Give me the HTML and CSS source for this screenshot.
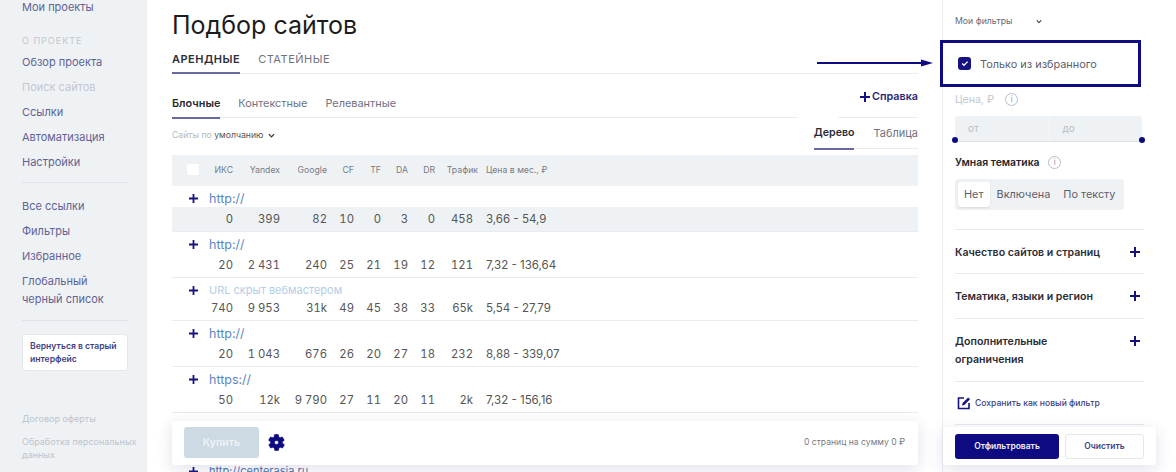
FILE: index.html
```html
<!DOCTYPE html>
<html lang="ru">
<head>
  <meta charset="UTF-8">
  <title>Подбор сайтов</title>
  <link rel="stylesheet" href="styles.css">
</head>
<body>
  <div class="layout">
    <!-- Левое меню -->
    <aside class="sidebar">
      <a class="side-link side-first">Мои проекты</a>
      <div class="side-title">О ПРОЕКТЕ</div>
      <a class="side-link">Обзор проекта</a>
      <a class="side-link side-muted">Поиск сайтов</a>
      <a class="side-link">Ссылки</a>
      <a class="side-link">Автоматизация</a>
      <a class="side-link">Настройки</a>
      <div class="side-line"></div>
      <a class="side-link">Все ссылки</a>
      <a class="side-link">Фильтры</a>
      <a class="side-link">Избранное</a>
      <a class="side-link side-wrap">Глобальный черный список</a>
      <div class="side-line side-line-low"></div>
      <a class="old-button">Вернуться в старый интерфейс</a>
      <a class="side-small side-small-first">Договор оферты</a>
      <a class="side-small">Обработка персональных данных</a>
    </aside>

    <!-- Таблица -->
    <main class="content">
      <h1>Подбор сайтов</h1>
      <div class="tabs">
        <a class="tab active">АРЕНДНЫЕ</a>
        <a class="tab">СТАТЕЙНЫЕ</a>
      </div>
      <div class="subtabs-row">
        <div class="subtabs">
          <a class="subtab active">Блочные</a>
          <a class="subtab">Контекстные</a>
          <a class="subtab">Релевантные</a>
        </div>
        <a class="help">
          <svg class="plus" viewBox="0 0 10 10"><path d="M5 0v10M0 5h10"/></svg>Справка
        </a>
      </div>
      <div class="toolbar">
        <div class="sort">Сайты по <b>умолчанию</b>
          <svg class="chevron" viewBox="0 0 8 5"><path d="M1 1l3 3 3-3"/></svg>
        </div>
        <div class="views">
          <a class="view active">Дерево</a>
          <a class="view">Таблица</a>
        </div>
      </div>

      <div class="table-head">
        <span class="check"></span>
        <div class="cols">
          <span>ИКС</span><span>Yandex</span><span>Google</span><span>CF</span><span>TF</span><span>DA</span><span>DR</span><span class="traffic">Трафик</span><span class="price">Цена в мес., ₽</span>
        </div>
      </div>

      <div class="row">
        <div class="url"><svg class="plus" viewBox="0 0 10 10"><path d="M5 0v10M0 5h10"/></svg><a>http://</a></div>
        <div class="cols nums grey">
          <span>0</span><span>399</span><span>82</span><span>10</span><span>0</span><span>3</span><span>0</span><span>458</span><span class="price">3,66 - 54,9</span>
        </div>
      </div>
      <div class="row">
        <div class="url"><svg class="plus" viewBox="0 0 10 10"><path d="M5 0v10M0 5h10"/></svg><a>http://</a></div>
        <div class="cols nums">
          <span>20</span><span>2 431</span><span>240</span><span>25</span><span>21</span><span>19</span><span>12</span><span>121</span><span class="price">7,32 - 136,64</span>
        </div>
      </div>
      <div class="row row-short">
        <div class="url"><svg class="plus" viewBox="0 0 10 10"><path d="M5 0v10M0 5h10"/></svg><a class="hidden-url">URL скрыт вебмастером</a></div>
        <div class="cols nums">
          <span>740</span><span>9 953</span><span>31k</span><span>49</span><span>45</span><span>38</span><span>33</span><span>65k</span><span class="price">5,54 - 27,79</span>
        </div>
      </div>
      <div class="row">
        <div class="url"><svg class="plus" viewBox="0 0 10 10"><path d="M5 0v10M0 5h10"/></svg><a>http://</a></div>
        <div class="cols nums">
          <span>20</span><span>1 043</span><span>676</span><span>26</span><span>20</span><span>27</span><span>18</span><span>232</span><span class="price">8,88 - 339,07</span>
        </div>
      </div>
      <div class="row">
        <div class="url"><svg class="plus" viewBox="0 0 10 10"><path d="M5 0v10M0 5h10"/></svg><a>https://</a></div>
        <div class="cols nums">
          <span>50</span><span>12k</span><span>9 790</span><span>27</span><span>11</span><span>20</span><span>11</span><span>2k</span><span class="price">7,32 - 156,16</span>
        </div>
      </div>
      <!-- строка под панелью покупки -->
      <div class="row row-covered"></div>
      <div class="row">
        <div class="url url-next"><svg class="plus" viewBox="0 0 10 10"><path d="M5 0v10M0 5h10"/></svg><a>http://centerasia.ru</a></div>
      </div>

      <div class="buy-bar">
        <a class="buy">Купить</a>
        <svg class="gear" viewBox="0 0 24 24"><path fill-rule="evenodd" d="M19.4 13c.1-.3.1-.7.1-1s0-.7-.1-1l2.1-1.6c.2-.2.2-.4.1-.6l-2-3.5c-.1-.2-.4-.3-.6-.2l-2.5 1c-.5-.4-1.1-.7-1.7-1l-.4-2.7c0-.2-.2-.4-.5-.4h-4c-.3 0-.5.2-.5.4l-.4 2.7c-.6.3-1.2.6-1.7 1l-2.5-1c-.2-.1-.5 0-.6.2l-2 3.5c-.1.2-.1.4.1.6L4.6 11c-.1.3-.1.7-.1 1s0 .7.1 1l-2.1 1.6c-.2.2-.2.4-.1.6l2 3.5c.1.2.4.3.6.2l2.5-1c.5.4 1.1.7 1.7 1l.4 2.7c0 .2.2.4.5.4h4c.3 0 .5-.2.5-.4l.4-2.7c.6-.3 1.2-.6 1.7-1l2.5 1c.2.1.5 0 .6-.2l2-3.5c.1-.2.1-.4-.1-.6L19.4 13zM12 14.6a2.6 2.6 0 1 1 0-5.2 2.6 2.6 0 0 1 0 5.2z"/></svg>
        <span class="total">0 страниц на сумму 0 ₽</span>
      </div>
    </main>

    <!-- Фильтры -->
    <aside class="filters">
      <div class="my-filters">Мои фильтры
        <svg class="chevron" viewBox="0 0 8 5"><path d="M1 1l3 3 3-3"/></svg>
      </div>
      <label class="fav-box">
        <span class="fav-check"><svg viewBox="0 0 10 8"><path d="M1.5 4l2.3 2.2 4.5-4.5"/></svg></span>
        Только из избранного
      </label>
      <div class="price-label">Цена, ₽ <span class="info">i</span></div>
      <div class="range">
        <span>от</span><span>до</span>
        <i class="dot dot-left"></i><i class="dot dot-right"></i>
      </div>
      <div class="smart-label">Умная тематика <span class="info">i</span></div>
      <div class="segments">
        <a class="segment active">Нет</a>
        <a class="segment">Включена</a>
        <a class="segment">По тексту</a>
      </div>
      <div class="group">
        <span>Качество сайтов и страниц</span>
        <svg class="plus" viewBox="0 0 10 10"><path d="M5 0v10M0 5h10"/></svg>
      </div>
      <div class="group group-mid">
        <span>Тематика, языки и регион</span>
        <svg class="plus" viewBox="0 0 10 10"><path d="M5 0v10M0 5h10"/></svg>
      </div>
      <div class="group group-tall">
        <span>Дополнительные ограничения</span>
        <svg class="plus" viewBox="0 0 10 10"><path d="M5 0v10M0 5h10"/></svg>
      </div>
      <a class="save">
        <svg class="edit" viewBox="0 0 14 14"><path d="M7 2H1.5v10.5H12V7"/><path class="edit-pen" d="M5 9.5l.6-2.4L11.2 1.5l1.8 1.8-5.6 5.6z"/></svg>
        Сохранить как новый фильтр
      </a>
      <div class="filter-bar">
        <a class="apply">Отфильтровать</a>
        <a class="clear">Очистить</a>
      </div>
    </aside>
  </div>

  <!-- Стрелка-пометка -->
  <svg class="arrow" viewBox="0 0 116 8"><path d="M0 4h105" /><polygon points="104,0.5 116,4 104,7.5"/></svg>
</body>
</html>
```

FILE: styles.css
```css
body {
  font-family: "Inter", "Liberation Sans", sans-serif;
  background: #fff;
  color: #222;
  margin: 0;
  height: 472px;
  overflow: hidden;
  position: relative;
}

a {
  text-decoration: none;
  color: inherit;
}

.layout {
  display: grid;
  grid-template-columns: 147px 795px 1fr;
  height: 472px;
}

/* sidebar */
.sidebar {
  background: #eff2f4;
  padding: 0 19px 0 22px;
  overflow: hidden;
}

.side-link {
  display: block;
  font-size: 11px;
  line-height: 18px;
  padding: 3.5px 0;
  color: #5f6297;
}

.side-first {
  margin-top: -6px;
}

.side-muted {
  color: #c3c6d3;
}

.side-wrap {
  width: 100px;
}

.side-title {
  font-size: 9px;
  letter-spacing: 1px;
  color: #c2c5cc;
  line-height: 14px;
  margin: 15px 0 1px;
}

.side-line {
  height: 1px;
  background: #dfe2e8;
  margin: 8px 0 10px;
}

.side-line-low {
  margin: 9px 0 13px;
}

.old-button {
  display: block;
  background: #fff;
  border: 1px solid #e4e7ec;
  border-radius: 3px;
  padding: 5px 7px;
  font-size: 8.6px;
  line-height: 12.5px;
  font-weight: 600;
  color: #3f3f85;
  height: 25px;
  margin-bottom: 41px;
}

.side-small {
  display: block;
  font-size: 9px;
  line-height: 13px;
  color: #c0c3cd;
  width: 125px;
  margin-bottom: 10px;
}

/* content */
.content {
  padding: 0 24px 0 25px;
  position: relative;
  overflow: hidden;
}

h1 {
  font-size: 25px;
  font-weight: 400;
  line-height: 36px;
  margin: 7px 0 2px;
  color: #1c1c1c;
}

.tabs {
  display: flex;
  gap: 18px;
  height: 28px;
  border-bottom: 1px solid #e8ebef;
}

.tab {
  font-size: 11px;
  letter-spacing: 0.5px;
  line-height: 28px;
  color: #6f7280;
  height: 28px;
}

.tab.active {
  font-weight: 600;
  color: #2e2e38;
  border-bottom: 2px solid #6a6aa3;
  height: 27px;
}

.subtabs-row {
  display: flex;
  margin-top: 16px;
  gap: 40px;
}

.subtabs {
  flex: 1;
  display: flex;
  gap: 18px;
  height: 27px;
  border-bottom: 1px solid #e8ebef;
}

.subtab {
  font-size: 10.9px;
  line-height: 26px;
  color: #6f7280;
}

.subtab.active {
  font-weight: 600;
  color: #2a2a34;
  height: 27px;
  border-bottom: 2px solid #6a6aa3;
}

.help {
  width: 80px;
  height: 27px;
  border-bottom: 1px solid #e8ebef;
  display: flex;
  justify-content: flex-end;
  align-items: flex-start;
  gap: 2px;
  font-size: 10.8px;
  line-height: 14px;
  font-weight: 600;
  color: #29297a;
}

.help .plus {
  margin-top: 2px;
}

.plus {
  width: 10px;
  height: 10px;
  flex: none;
  stroke: #15137f;
  stroke-width: 2;
  fill: none;
}

.toolbar {
  height: 37px;
  display: flex;
  justify-content: space-between;
}

.sort {
  font-size: 8.7px;
  line-height: 12px;
  color: #b4b8c0;
  margin-top: 11px;
}

.sort b {
  font-weight: 400;
  color: #555;
}

.chevron {
  width: 7px;
  height: 5px;
  margin-left: 2px;
  fill: none;
  stroke: #333;
  stroke-width: 1.4;
}

.views {
  display: flex;
  gap: 19px;
  height: 29px;
  border-bottom: 1px solid #e8ebef;
  margin-top: 1px;
}

.view {
  font-size: 11px;
  line-height: 28px;
  color: #6f7280;
}

.view.active {
  font-size: 10.6px;
  font-weight: 600;
  color: #2a2a34;
  height: 29px;
  border-bottom: 2px solid #6a6aa3;
}

.table-head {
  height: 31px;
  background: #eff2f4;
  position: relative;
}

.check {
  position: absolute;
  left: 15px;
  top: 9px;
  width: 12px;
  height: 11px;
  background: #fff;
  border-radius: 2px;
}

.cols {
  display: grid;
  grid-template-columns: 61px 47px 47px 27px 27px 27px 27px 38px 1fr;
  text-align: right;
  white-space: nowrap;
}

.table-head .cols {
  font-size: 8.7px;
  line-height: 31px;
  color: #777b84;
}

.traffic {
  margin-right: -5px;
}

.price {
  text-align: left;
  margin-left: 13px;
}

.row {
  padding-top: 2px;
  border-bottom: 1px solid #e8ebef;
}

.row-covered {
  height: 43px;
}

.url {
  height: 20px;
  display: flex;
  align-items: center;
  padding-left: 17px;
  gap: 11px;
  font-size: 12.5px;
  color: #5b86c4;
}

.url .plus {
  width: 9px;
  height: 9px;
}

.hidden-url {
  font-size: 11px;
  color: #b4cde8;
}

.url-next {
  font-size: 11px;
  color: #4d74b0;
}

.nums {
  margin-top: -1px;
  height: 24px;
  line-height: 24px;
  font-size: 11.3px;
  font-variant-numeric: tabular-nums;
  color: #555;
}

.nums .price {
  font-size: 11.5px;
  font-variant-numeric: normal;
}

.grey {
  background: #eff2f4;
}

.row-short .nums {
  margin-top: -4px;
}

.buy-bar {
  position: absolute;
  left: 25px;
  top: 421px;
  width: 746px;
  height: 44px;
  box-sizing: border-box;
  background: #fff;
  border-radius: 3px;
  box-shadow: 0 4px 16px rgba(60, 60, 130, 0.16);
  padding: 6px 13px 0 12px;
  display: flex;
  gap: 8px;
}

.buy {
  width: 75px;
  height: 31px;
  background: #cddae3;
  border-radius: 3px;
  color: #eef3f6;
  font-size: 10.5px;
  font-weight: 600;
  line-height: 31px;
  text-align: center;
}

.gear {
  width: 19px;
  height: 19px;
  fill: #0d0a82;
  stroke: #0d0a82;
  stroke-width: 0.8;
  margin-top: 6px;
}

.total {
  margin-left: auto;
  font-size: 8.6px;
  line-height: 31px;
  color: #777b84;
}

/* filters */
.filters {
  border-left: 1px solid #eceef2;
  padding: 0 32px 0 12px;
  position: relative;
}

.my-filters {
  font-size: 8.7px;
  line-height: 12px;
  color: #666a73;
  margin-top: 15px;
}

.my-filters .chevron {
  width: 6px;
  margin-left: 21px;
}

.fav-box {
  display: flex;
  align-items: center;
  gap: 9px;
  box-sizing: border-box;
  height: 47px;
  margin: 13px 3px 0 -15px;
  padding-left: 15px;
  border: 3px solid #0d0a82;
  font-size: 10.9px;
  color: #5c606b;
}

.fav-check {
  width: 13px;
  height: 13px;
  background: #15137f;
  border-radius: 3px;
  display: flex;
  align-items: center;
  justify-content: center;
}

.fav-check svg {
  width: 8px;
  height: 7px;
  fill: none;
  stroke: #fff;
  stroke-width: 1.6;
}

.price-label {
  font-size: 10.5px;
  line-height: 16px;
  color: #c3c7d0;
  margin-top: 5px;
}

.info {
  display: inline-block;
  width: 11px;
  height: 11px;
  margin-left: 5px;
  border: 1px solid #b6bdcf;
  border-radius: 50%;
  font-size: 8px;
  line-height: 11px;
  text-align: center;
  color: #8c93aa;
  font-weight: 400;
  vertical-align: 1px;
}

.price-label .info {
  margin-left: 8px;
}

.range {
  position: relative;
  display: grid;
  grid-template-columns: 1fr 1fr;
  height: 25px;
  margin: 8px 2px 0 0;
  background: #eff2f4;
  border-bottom: 1px solid #dfe3ea;
  border-radius: 3px 3px 0 0;
  font-size: 10px;
  line-height: 24px;
  color: #b8bcc4;
}

.range span {
  padding-left: 13px;
}

.range span + span {
  border-left: 1px solid #f6f7f9;
}

.dot {
  position: absolute;
  top: 21px;
  width: 6px;
  height: 6px;
  border-radius: 50%;
  background: #0d0a82;
}

.dot-left {
  left: -3px;
}

.dot-right {
  right: -3px;
}

.smart-label {
  font-size: 10.4px;
  font-weight: 600;
  line-height: 16px;
  color: #24242c;
  margin-top: 13px;
}

.smart-label .info {
  margin-left: 6px;
}

.segments {
  display: flex;
  gap: 1px;
  height: 31px;
  width: 169px;
  box-sizing: border-box;
  margin-top: 8px;
  padding: 3px;
  background: #eff2f4;
  border-radius: 3px;
  font-size: 10.9px;
  line-height: 25px;
  color: #5c606b;
  white-space: nowrap;
}

.segment {
  padding: 0 6px;
}

.segment.active {
  background: #fff;
  border-radius: 3px;
  box-shadow: 0 1px 2px rgba(40, 40, 80, 0.12);
}

.group {
  display: flex;
  justify-content: space-between;
  align-items: flex-start;
  border-top: 1px solid #e8ebef;
  height: 44px;
  padding-top: 14px;
  box-sizing: border-box;
  font-size: 10.6px;
  font-weight: 600;
  line-height: 18px;
  color: #2c2c36;
}

.group .plus {
  margin: 3px 4px 0 0;
}

.segments + .group {
  margin-top: 19px;
}

.group-mid {
  height: 45px;
}

.group-tall {
  height: 63px;
}

.group-tall span {
  width: 120px;
}

.save {
  display: flex;
  align-items: center;
  gap: 4px;
  height: 44px;
  border-top: 1px solid #e8ebef;
  border-bottom: 1px solid #e8ebef;
  box-sizing: border-box;
  font-size: 8.6px;
  font-weight: 500;
  color: #3f3f85;
}

.edit {
  width: 14px;
  height: 14px;
  margin-left: 2px;
  fill: none;
  stroke: #15137f;
  stroke-width: 1.6;
}

.edit-pen {
  fill: #15137f;
  stroke: none;
}

.filter-bar {
  position: absolute;
  left: 0;
  top: 427px;
  width: 213px;
  height: 38px;
  box-sizing: border-box;
  background: #fff;
  border-radius: 3px;
  box-shadow: 0 4px 16px rgba(60, 60, 130, 0.16);
  padding: 7px 12px 0;
  display: flex;
  gap: 6px;
}

.apply {
  width: 104px;
  height: 25px;
  background: #0d0a82;
  border-radius: 3px;
  color: #f0f0f8;
  font-size: 8.5px;
  font-weight: 600;
  line-height: 25px;
  text-align: center;
}

.clear {
  width: 79px;
  height: 25px;
  box-sizing: border-box;
  border: 1px solid #e4e7ec;
  border-radius: 3px;
  color: #3f3f85;
  font-size: 8.5px;
  font-weight: 600;
  line-height: 23px;
  text-align: center;
}

.arrow {
  position: absolute;
  left: 817px;
  top: 59px;
  width: 116px;
  height: 8px;
  fill: #0d0a82;
  stroke: #0d0a82;
  stroke-width: 0;
}

.arrow path {
  stroke-width: 2;
}
```
